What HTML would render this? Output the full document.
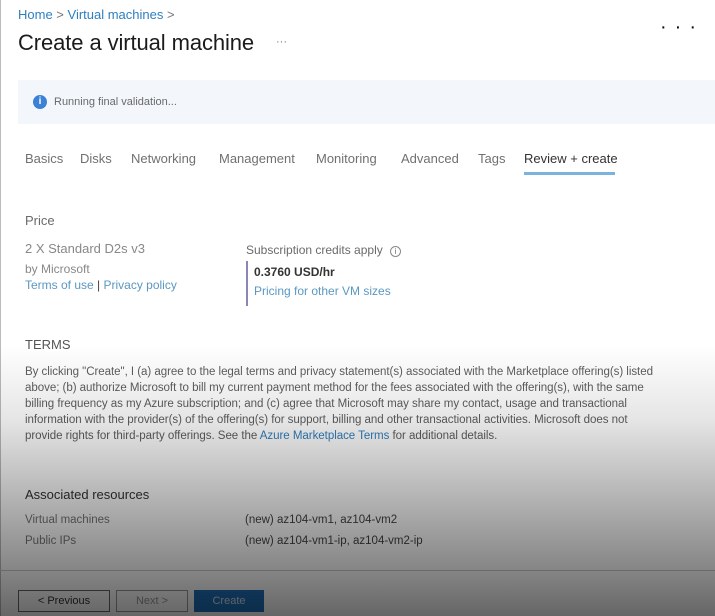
<!DOCTYPE html>
<html><head><style>
*{margin:0;padding:0;box-sizing:border-box}
body{width:715px;height:616px;overflow:hidden;background:#fff;font-family:"Liberation Sans",sans-serif;position:relative;color:#323130}
.a{position:absolute;white-space:nowrap}
.link{color:#2f7fbf}
.g{color:#6a6a6a}
.t{position:absolute;top:151px;font-size:13px;color:#707070;white-space:nowrap}
</style></head><body>
<div class="a" style="left:0;top:0;width:1px;height:616px;background:#bbb"></div>
<div class="a link" style="left:18px;top:7px;font-size:13px">Home <span style="color:#777">&gt;</span> Virtual machines <span style="color:#777">&gt;</span></div>
<div class="a" style="left:18px;top:30px;font-size:22px;color:#1b1b1b;letter-spacing:-0.1px">Create a virtual machine</div>
<div class="a" style="left:276px;top:36px;font-size:11px;color:#777">···</div>
<div class="a" style="left:660px;top:16px;font-size:20px;color:#111;letter-spacing:8px">···</div>
<div class="a" style="left:18px;top:80px;width:697px;height:44px;background:#f3f7fb"></div>
<div class="a" style="left:33px;top:95px;width:14px;height:14px;border-radius:50%;background:#3b82d6;color:#fff;font-size:10px;font-weight:bold;text-align:center;line-height:14px">i</div>
<div class="a g" style="left:54px;top:96px;font-size:11px">Running final validation...</div>
<div class="t" style="left:25px">Basics</div>
<div class="t" style="left:80px">Disks</div>
<div class="t" style="left:131px">Networking</div>
<div class="t" style="left:219px">Management</div>
<div class="t" style="left:316px">Monitoring</div>
<div class="t" style="left:401px">Advanced</div>
<div class="t" style="left:478px">Tags</div>
<div class="t" style="left:524px;color:#333">Review + create</div>
<div class="a" style="left:524px;top:172px;width:91px;height:3px;background:#7ab3dc"></div>
<div class="a g" style="left:25px;top:213px;font-size:13px">Price</div>
<div class="a g" style="left:25px;top:241px;font-size:13px;color:#888">2 X Standard D2s v3</div>
<div class="a g" style="left:25px;top:262px;font-size:12px;color:#888">by Microsoft</div>
<div class="a" style="left:25px;top:278px;font-size:12px;color:#5a98c2">Terms of use <span style="color:#444">|</span> Privacy policy</div>
<div class="a g" style="left:246px;top:243px;font-size:12px">Subscription credits apply <span style="display:inline-block;width:11px;height:11px;border:1px solid #888;border-radius:50%;font-size:8px;text-align:center;line-height:9px;margin-left:4px">i</span></div>
<div class="a" style="left:246px;top:261px;width:2px;height:45px;background:#8a86b8"></div>
<div class="a" style="left:254px;top:265px;font-size:12px;font-weight:bold;color:#333">0.3760 USD/hr</div>
<div class="a" style="left:254px;top:284px;font-size:12px;color:#5a98c2">Pricing for other VM sizes</div>
<div class="a g" style="left:25px;top:337px;font-size:13px;color:#555">TERMS</div>
<div class="a" style="left:25px;top:364px;font-size:11.55px;line-height:16px;color:#5e5e5e;letter-spacing:-0.05px">By clicking "Create", I (a) agree to the legal terms and privacy statement(s) associated with the Marketplace offering(s) listed<br>above; (b) authorize Microsoft to bill my current payment method for the fees associated with the offering(s), with the same<br>billing frequency as my Azure subscription; and (c) agree that Microsoft may share my contact, usage and transactional<br>information with the provider(s) of the offering(s) for support, billing and other transactional activities. Microsoft does not<br>provide rights for third-party offerings. See the <span class="link">Azure Marketplace Terms</span> for additional details.</div>
<div class="a" style="left:25px;top:487px;font-size:13px;color:#333">Associated resources</div>
<div class="a" style="left:25px;top:514px;font-size:11.5px;color:#777">Virtual machines</div>
<div class="a" style="left:245px;top:514px;font-size:11.5px;color:#444">(new) az104-vm1, az104-vm2</div>
<div class="a" style="left:25px;top:535px;font-size:11.5px;color:#777">Public IPs</div>
<div class="a" style="left:245px;top:535px;font-size:11.5px;color:#444">(new) az104-vm1-ip, az104-vm2-ip</div>
<div class="a" style="left:0;top:570px;width:715px;height:1px;background:#ccc"></div>
<div class="a" style="left:18px;top:590px;width:92px;height:22px;border:1px solid #666;font-size:11px;text-align:center;line-height:20px;color:#333">&lt; Previous</div>
<div class="a" style="left:116px;top:590px;width:72px;height:22px;border:1px solid #999;font-size:11px;text-align:center;line-height:20px;color:#999">Next &gt;</div>
<div class="a" style="left:194px;top:590px;width:70px;height:22px;background:#1f6fb8;font-size:11px;text-align:center;line-height:22px;color:#cfe0f0">Create</div>
<div class="a" style="left:0;top:0;width:715px;height:616px;background:linear-gradient(to bottom,rgba(0,0,0,0) 0px,rgba(0,0,0,0) 345px,rgba(0,0,0,0.1) 420px,rgba(0,0,0,0.3) 500px,rgba(0,0,0,0.48) 570px,rgba(0,0,0,0.6) 616px)"></div>
</body></html>
